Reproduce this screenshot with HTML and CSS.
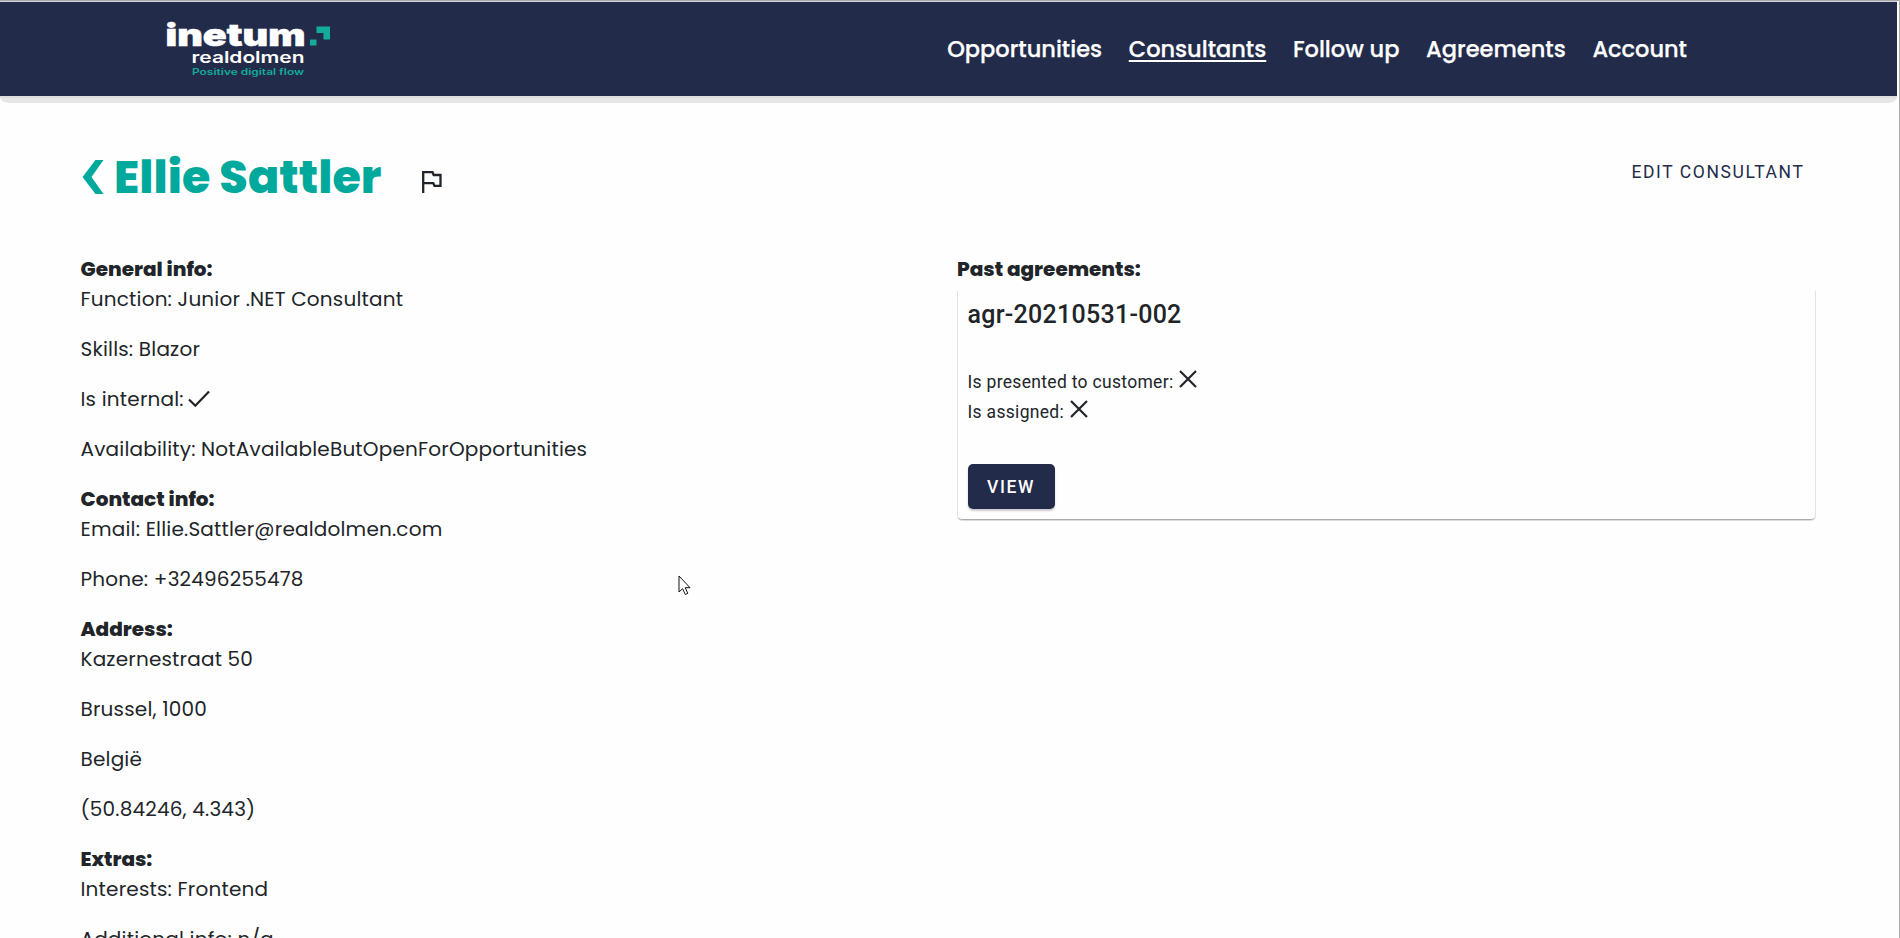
FILE: index.html
```html
<!DOCTYPE html>
<html lang="en">
<head>
<meta charset="utf-8">
<title>Ellie Sattler</title>
<link rel="stylesheet" href="styles.css">
</head>
<body>
<header class="topbar">
  <svg class="logo" width="170" height="64" viewBox="0 0 170 64" role="img" aria-label="inetum realdolmen">
    <text class="logo-main" x="3.500" y="31.500" textLength="140" lengthAdjust="spacingAndGlyphs">inetum</text>
    <text class="logo-sub" x="29.500" y="48.500" textLength="113" lengthAdjust="spacingAndGlyphs">realdolmen</text>
    <text class="logo-tag" x="30" y="61" textLength="112" lengthAdjust="spacingAndGlyphs">Positive digital flow</text>
    <path class="logo-mark" d="M148 25.500h6.500v6H148zM154.500 12.500H168V25.500h-6.500V19h-7z"/>
  </svg>
  <nav class="nav">
    <a>Opportunities</a>
    <a class="active">Consultants</a>
    <a>Follow up</a>
    <a>Agreements</a>
    <a>Account</a>
  </nav>
</header>
<div class="topbar-edge"></div>
<main class="page">
  <div class="heading">
    <svg class="back" width="22" height="34" viewBox="0 0 22 34"><path d="M13.500 0H21.500L9.500 17L21.500 34H13.500L.5 17z"/></svg>
    <h1>Ellie Sattler</h1>
    <svg class="flag" width="20" height="22" viewBox="0 0 20 22"><path d="M1.200 22V1.200H10.500L11.700 4H18.500V14.800H12.500L11.300 12.200H1.200"/></svg>
    <a class="edit">EDIT CONSULTANT</a>
  </div>
  <div class="columns">
    <section class="info">
      <h2>General info:</h2>
      <p>Function: Junior .NET Consultant</p>
      <p>Skills: Blazor</p>
      <p>Is internal:<svg class="check" width="22" height="18" viewBox="0 0 22 18"><path d="M1 9.500L7.300 15.800L21 1.500"/></svg></p>
      <p>Availability: NotAvailableButOpenForOpportunities</p>
      <h2>Contact info:</h2>
      <p>Email: Ellie.Sattler@realdolmen.com</p>
      <p>Phone: +32496255478</p>
      <h2>Address:</h2>
      <p>Kazernestraat 50</p>
      <p>Brussel, 1000</p>
      <p>België</p>
      <p>(50.84246, 4.343)</p>
      <h2>Extras:</h2>
      <p>Interests: Frontend</p>
      <p>Additional info: n/a</p>
    </section>
    <section class="agreements">
      <h2>Past agreements:</h2>
      <article class="card">
        <h3>agr-20210531-002</h3>
        <div class="facts">
          <div class="fact"><span>Is presented to customer:</span><svg width="18" height="18" viewBox="0 0 18 18"><path d="M1 1L17 17M17 1L1 17"/></svg></div>
          <div class="fact"><span>Is assigned:</span><svg width="18" height="18" viewBox="0 0 18 18"><path d="M1 1L17 17M17 1L1 17"/></svg></div>
        </div>
        <button class="view">VIEW</button>
      </article>
    </section>
  </div>
</main>
<svg class="pointer" width="14" height="21" viewBox="0 0 14 21"><path d="M1 1V17L4.600 13.700L7.300 19.500L9.800 18.300L7.200 12.700H12z"/></svg>
</body>
</html>
```
FILE: styles.css
```css
* { box-sizing: border-box; }
body {
  margin: 0;
  height: 938px;
  overflow: hidden;
  border-top: 1px solid #a9a9ad;
  border-right: 1px solid #a9a9a9;
  background: #fefefe;
  color: #212529;
  font: 20px/30px Poppins, Inter, sans-serif;
  letter-spacing: .1875px;
}
.topbar {
  display: flex;
  justify-content: space-between;
  height: 95px;
  margin-right: 2px;
  padding: 12px 210px 0 162px;
  border-top: 1px solid #d5d6dc;
  background: #232b4a;
  letter-spacing: 0;
}
.topbar-edge {
  height: 7px;
  margin-right: 2px;
  border-top: 2px solid #dfdcdc;
  border-radius: 0 0 9px 9px / 0 0 6px 6px;
  background: #e6e6e6;
}
.logo-main { font: 900 30px Inter, sans-serif; fill: #fff; stroke: #fff; stroke-width: .6; }
.logo-sub { font: 600 16px Inter, sans-serif; fill: #fff; }
.logo-tag { font: 600 8.500px Inter, sans-serif; fill: #14ab9b; }
.logo-mark { fill: #14ab9b; }
.nav { display: flex; gap: 26.700px; padding-top: 16px; font-size: 22.500px; line-height: 38px; font-weight: 500; color: #fff; -webkit-text-stroke: .25px #fff; }
.nav a { white-space: nowrap; }
.active { text-decoration: underline; text-decoration-thickness: 2px; text-underline-offset: 3px; }
.page { padding: 45px 83px 0 80.500px; }
.heading { display: flex; height: 106px; }
.back { margin: 12px 10px 0 1.500px; fill: #00a99b; }
h1 { margin: 0; font-size: 46px; line-height: 58px; font-weight: 800; letter-spacing: .08px; color: #00a99b; white-space: nowrap; }
.flag { margin: 23px 0 0 41px; fill: none; stroke: #212529; stroke-width: 2.300; }
.edit { margin: 9px 11.500px 0 auto; font: 17.500px/30px Roboto, sans-serif; letter-spacing: 1.610px; color: #232b4a; }
.columns { display: grid; grid-template-columns: 1fr 859px; column-gap: 19px; }
h2 { margin: 0; font-size: 20px; line-height: 30px; font-weight: 800; letter-spacing: 0; }
.info p { margin: 0 0 20px; white-space: nowrap; }
.check { margin: 0 0 -2px 4px; fill: none; stroke: #212529; stroke-width: 2.200; }
.card {
  height: 229px;
  margin-top: 7px;
  padding: 9px 9.500px;
  border: 1px solid #e2e2e2;
  border-top: 0;
  border-bottom-color: #aaa;
  border-radius: 0 0 5px 5px;
  box-shadow: 0 1px 0 #ddd;
  font-family: Roboto, sans-serif;
}
h3 { margin: 0; font-size: 25px; line-height: 30px; font-weight: 500; letter-spacing: .27px; }
.facts { padding: 37px 0; font-size: 17.500px; letter-spacing: .31px; }
.fact { display: flex; height: 30px; line-height: 30px; }
.fact svg { margin: 3px 0 0 5.500px; fill: none; stroke: #212529; stroke-width: 2.200; }
.view { display: block; width: 87px; height: 45px; padding: 0; border: 0; border-radius: 5px; background: #232b4a; box-shadow: 0 2px 2px #ccc; color: #fff; font: 500 17.500px Roboto, sans-serif; letter-spacing: 1.560px; }
.pointer { position: absolute; left: 678px; top: 575px; fill: #fff; stroke: #111; stroke-width: 1; }
```
